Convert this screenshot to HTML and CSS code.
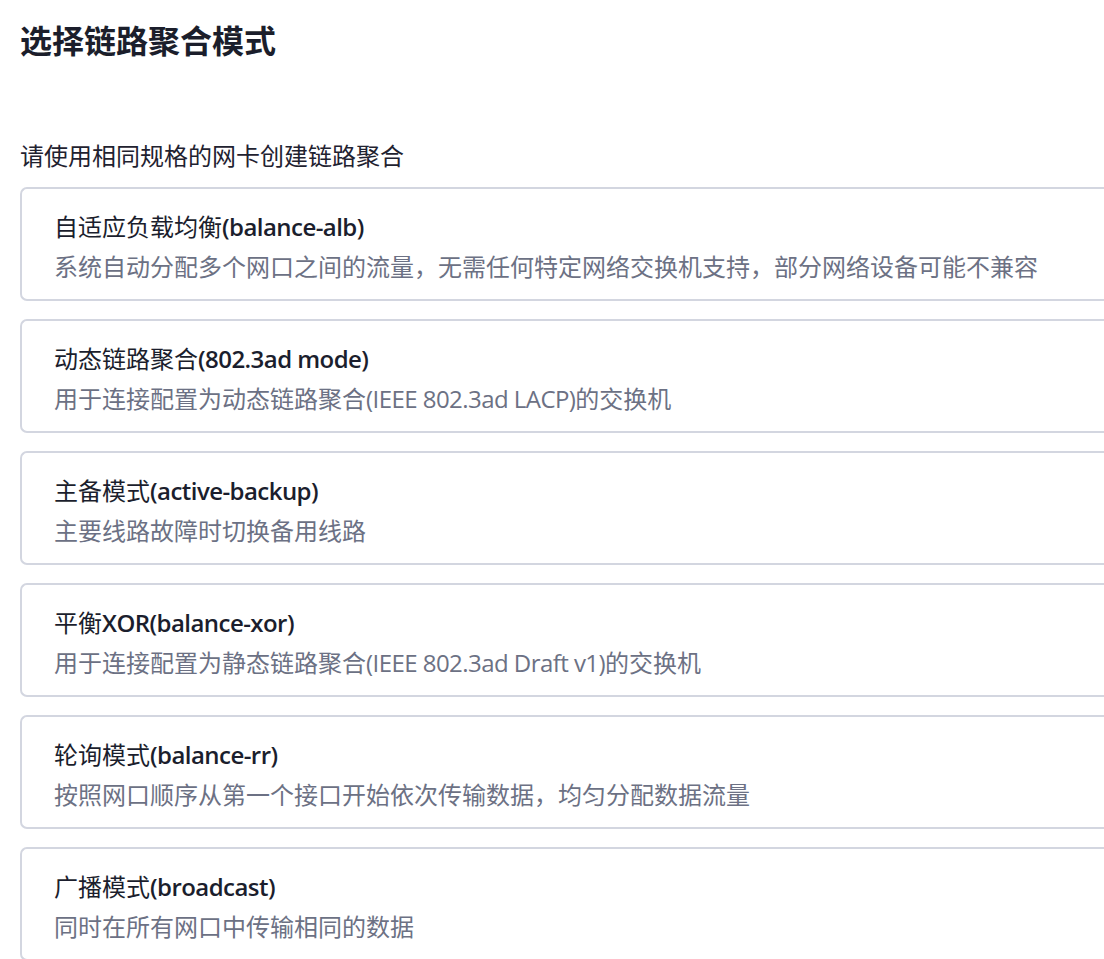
FILE: index.html
```html
<!DOCTYPE html>
<html lang="zh-CN">
<head>
<meta charset="utf-8">
<title>选择链路聚合模式</title>
<link rel="stylesheet" href="styles.css">
</head>
<body>
<div class="page">
  <h1 class="title">选择链路聚合模式</h1>
  <p class="hint">请使用相同规格的网卡创建链路聚合</p>
  <div class="list">
    <div class="card">
      <div class="card-title">自适应负载均衡<span class="en">(balance-alb)</span></div>
      <div class="card-desc">系统自动分配多个网口之间的流量，无需任何特定网络交换机支持，部分网络设备可能不兼容</div>
    </div>
    <div class="card">
      <div class="card-title">动态链路聚合<span class="en">(802.3ad mode)</span></div>
      <div class="card-desc">用于连接配置为动态链路聚合<span class="en">(IEEE 802.3ad LACP)</span>的交换机</div>
    </div>
    <div class="card">
      <div class="card-title">主备模式<span class="en">(active-backup)</span></div>
      <div class="card-desc">主要线路故障时切换备用线路</div>
    </div>
    <div class="card">
      <div class="card-title">平衡<span class="en">XOR(balance-xor)</span></div>
      <div class="card-desc">用于连接配置为静态链路聚合<span class="en">(IEEE 802.3ad Draft v1)</span>的交换机</div>
    </div>
    <div class="card">
      <div class="card-title">轮询模式<span class="en">(balance-rr)</span></div>
      <div class="card-desc">按照网口顺序从第一个接口开始依次传输数据，均匀分配数据流量</div>
    </div>
    <div class="card">
      <div class="card-title">广播模式<span class="en">(broadcast)</span></div>
      <div class="card-desc">同时在所有网口中传输相同的数据</div>
    </div>
  </div>
</div>
</body>
</html>
```
FILE: styles.css
```css
html, body {
  margin: 0;
  padding: 0;
  background: #ffffff;
}
body {
  font-family: "Open Sans", "Noto Sans CJK SC", sans-serif;
  color: #1b1e2d;
}
.page {
  padding: 17px 0 0 20px;
}
.title {
  margin: 0 0 71px 0;
  font-size: 32px;
  line-height: 48px;
  font-weight: 700;
  color: #1b1e2b;
}
.hint {
  margin: 0 0 11px 0;
  font-size: 24px;
  line-height: 40px;
  color: #1f2230;
}
.list {
  display: flex;
  flex-direction: column;
  gap: 18px;
}
.card {
  border: 2px solid #d3d6e0;
  border-right: 0;
  border-radius: 7px 0 0 7px;
  padding: 18px 0 12px 32px;
}
.card-title {
  font-size: 24px;
  line-height: 40px;
  color: #1b1e2d;
}
.card-title .en {
  font-weight: 600;
}
.card-desc {
  font-size: 24px;
  line-height: 40px;
  color: #6c7184;
}
.en {
  letter-spacing: -0.55px;
}
```
